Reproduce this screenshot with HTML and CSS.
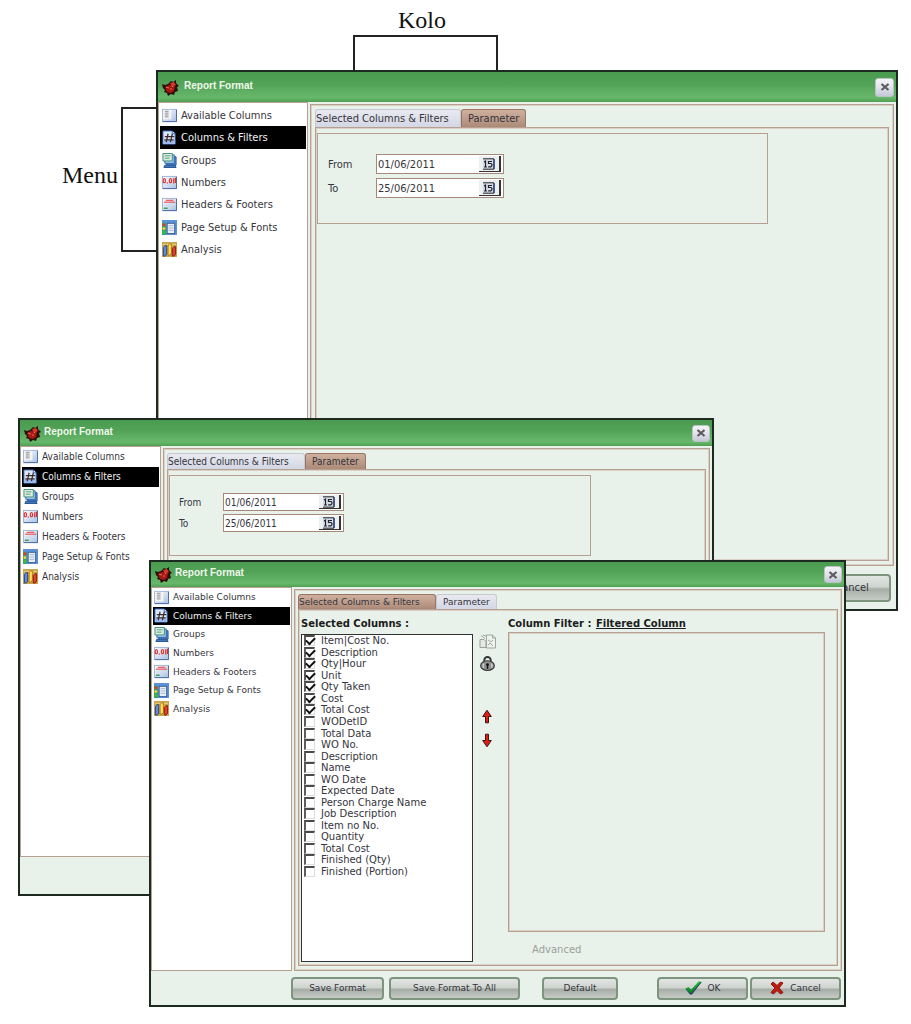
FILE: index.html
```html
<!DOCTYPE html>
<html lang="en">
<head>
    <meta charset="UTF-8">
    <meta name="viewport" content="width=device-width, initial-scale=1.0">
    <title>Report Format</title>
    <link rel="stylesheet" href="styles.css">
</head>
<body>
    <!-- Shared icons -->
    <svg class="sprite" aria-hidden="true">
        <defs>
            <linearGradient id="g-blue" x1="0" y1="0" x2="1" y2="1">
                <stop offset="0" stop-color="#ffffff"/>
                <stop offset="1" stop-color="#a9c0e4"/>
            </linearGradient>
            <linearGradient id="g-check" x1="0" y1="0" x2="0" y2="1">
                <stop offset="0" stop-color="#22d022"/>
                <stop offset="1" stop-color="#0c7a2a"/>
            </linearGradient>
        </defs>
        <symbol id="i-app" viewBox="0 0 17 17">
            <path d="M0 5l3 1 3-1 3-3 2 1 3-2 0 3 3 3-2 1 1 4-3 1-1 3-3-1-3 2-1-3-3-1 1-2-2-2z" fill="#2a0f0a"/>
            <path d="M3 8l4-2 6 1-1 5-3 2-4-1z" fill="#a81812"/>
            <path d="M8 4l4-1 2 3-4 2z" fill="#d8362a"/>
            <path d="M4 8l3 1M8 10l2 0M10 7l1 1" stroke="#f08070" stroke-width="0.800"/>
        </symbol>
        <symbol id="i-available" viewBox="0 0 16 14">
            <rect x="0.500" y="0.500" width="15" height="13" fill="url(#g-blue)" stroke="#9db3d3"/>
            <rect x="1" y="1" width="9" height="10" fill="#f4f4f4"/>
            <path d="M3 2.500h4M3 4.500h4M3 6.500h4M3 8.500h4" stroke="#8a8a8a"/>
            <path d="M1 13.500h14.500V1" fill="none" stroke="#47689c"/>
        </symbol>
        <symbol id="i-columns" viewBox="0 0 16 16">
            <path d="M1 1h10l3 3v11H1z" fill="#dce8fa" stroke="#3a66ba"/>
            <path d="M1 11h13v4H1z" fill="#9bb9ec"/>
            <path d="M11 1v3h3" fill="#fff" stroke="#3a66ba"/>
            <path d="M6.500 4L4.500 13M11 4L9 13M3 7h10M2.500 10.500h10" stroke="#3b2a2a" stroke-width="1.300" fill="none"/>
        </symbol>
        <symbol id="i-groups" viewBox="0 0 16 16">
            <path d="M5 4h10v9H5z" fill="#4f8dd4" stroke="#234f8c"/>
            <path d="M3 2h10v9H3z" fill="#a9cdf2" stroke="#2f66a8"/>
            <path d="M1 0.500h10v8H1z" fill="#d8efdc" stroke="#3c8a78"/>
            <path d="M3 3h6M3 5.500h5" stroke="#5c9b86"/>
            <path d="M3 13h11l1 2.500H2z" fill="#3f78bf" stroke="#234f8c"/>
        </symbol>
        <symbol id="i-numbers" viewBox="0 0 16 14">
            <rect x="0.500" y="0.500" width="15" height="13" fill="url(#g-blue)" stroke="#9db3d3"/>
            <ellipse cx="2.500" cy="5" rx="1.200" ry="2.300" fill="none" stroke="#e0281f" stroke-width="1.200"/>
            <path d="M5 7.500h1.300M12.500 2.500v5.500M14.300 2v5.500" stroke="#e0281f" stroke-width="1.200"/>
            <ellipse cx="9" cy="5" rx="1.200" ry="2.300" fill="none" stroke="#e0281f" stroke-width="1.200"/>
            <path d="M1 13.500h14.500V1" fill="none" stroke="#47689c"/>
        </symbol>
        <symbol id="i-headers" viewBox="0 0 16 14">
            <rect x="0.500" y="0.500" width="15" height="13" fill="url(#g-blue)" stroke="#9db3d3"/>
            <path d="M4 2.500h8M2 4.500h12" stroke="#f03030"/>
            <path d="M2 7.500h12" stroke="#d4dae4"/>
            <path d="M2 11h4" stroke="#2ea043" stroke-width="1.500"/>
            <path d="M1 13.500h14.500V1" fill="none" stroke="#47689c"/>
        </symbol>
        <symbol id="i-page" viewBox="0 0 16 16">
            <rect width="16" height="16" fill="#5b91d8"/>
            <rect y="3" width="4" height="13" fill="#2fa36b"/>
            <circle cx="2" cy="5" r="1.600" fill="#e63a28"/>
            <circle cx="2" cy="9" r="1.600" fill="#f0d020"/>
            <circle cx="2" cy="13" r="1.600" fill="#39c439"/>
            <rect x="5.500" y="3.500" width="8" height="11" fill="#e8eef8" stroke="#3d5f8f"/>
            <path d="M7 6h5M7 8.500h5M7 11h5" stroke="#a3b6d2"/>
        </symbol>
        <symbol id="i-analysis" viewBox="0 0 16 16">
            <rect width="16" height="16" fill="#c9a54c"/>
            <path d="M1 2.500h14M1 5.500h14" stroke="#e9d08a"/>
            <path d="M1.500 6l1.500-2h2v9l-1.500 2h-2z" fill="#5f8ae0" stroke="#26458a"/>
            <path d="M6.500 4L8 2h2v10l-1.500 2h-2z" fill="#ffdf5a" stroke="#b07a10"/>
            <path d="M11 7l1.500-2h2v8L13 15h-2z" fill="#e0402c" stroke="#8a1a12"/>
        </symbol>
        <symbol id="i-close" viewBox="0 0 10 10">
            <path d="M1.500 2l7 6M8.500 2l-7 6" stroke="#5a5a60" stroke-width="2.200"/>
        </symbol>
        <symbol id="i-calendar" viewBox="0 0 12 12">
            <path d="M0 1h11v10H0" fill="#d4dcea"/>
            <path d="M0 0.800h11M0 11.200h11" stroke="#222" stroke-width="1"/>
            <path d="M11 1v10" stroke="#23356e" stroke-width="1.600"/>
            <path d="M1 4l1.500-1v6M1 9h3M9 3.500H5.500V5.500h2.500q1 .5 1 1.600t-1 1.700H5.200" fill="none" stroke="#222" stroke-width="1.200"/>
        </symbol>
        <symbol id="i-copy" viewBox="0 0 17 15">
            <path d="M7.500 1h6l3 3v10h-9z" fill="#eef2ee" stroke="#a0a5a0"/>
            <path d="M13.500 1v3h3" fill="none" stroke="#a0a5a0"/>
            <path d="M1 5.500h4l2 2v6H1z" fill="#e4e9e4" stroke="#9a9f9a"/>
            <path d="M2 1.500l4 3M4 1l3 1M9 6l3 2 2-2M9 11l2-2 3 3" fill="none" stroke="#a0a5a0"/>
        </symbol>
        <symbol id="i-lock" viewBox="0 0 14 14">
            <path d="M4 6V4a3 3 0 0 1 6 0v2" fill="none" stroke="#333" stroke-width="1.800"/>
            <ellipse cx="7" cy="9" rx="6.400" ry="4.500" fill="#8f9290" stroke="#333"/>
            <path d="M3 7v4M11 7v4" stroke="#dfe2df"/>
            <circle cx="7" cy="8" r="1.300" fill="#111"/>
            <path d="M7 8v4" stroke="#111" stroke-width="1.400"/>
        </symbol>
        <symbol id="i-up" viewBox="0 0 10 14">
            <path d="M5 0.700L9.300 7H6.500v6.300h-3V7H0.700z" fill="#dc1e16" stroke="#3c1410"/>
        </symbol>
        <symbol id="i-down" viewBox="0 0 10 14">
            <path d="M5 13.300L9.300 7H6.500V0.700h-3V7H0.700z" fill="#dc1e16" stroke="#3c1410"/>
        </symbol>
        <symbol id="i-ok" viewBox="0 0 17 14">
            <path d="M0.500 8l3.500-1 2 2L14 1h2.800L7 13.500H5z" fill="#27406b"/>
            <path d="M0.500 7.500l3-1.500 2.500 3L13.500 0.500h2.500L6.500 12H5z" fill="url(#g-check)"/>
        </symbol>
        <symbol id="i-cancel" viewBox="0 0 14 14">
            <path d="M1 3l2-2 4 3.500L10.500 1 13 2 9 7l4 4.500L10.500 13 7 9.500 3.500 13 1 11.500 5 7z" fill="#c01c12" stroke="#8d120b"/>
        </symbol>
    </svg>

    <main class="desktop">
        <div class="callout callout-top">
            <span class="callout-label">Kolo</span>
            <span class="bracket bracket-top"></span>
        </div>
        <div class="callout callout-side">
            <span class="callout-label">Menu</span>
            <span class="bracket bracket-side"></span>
        </div>

        <!-- Large window -->
        <section class="window window-large">
            <header class="titlebar">
                <svg class="app-icon"><use href="#i-app"/></svg>
                <h2>Report Format</h2>
                <button class="close" aria-label="Close"><svg><use href="#i-close"/></svg></button>
            </header>
            <div class="body">
                <nav class="menu">
                    <ul>
                        <li><button><svg><use href="#i-available"/></svg>Available Columns</button></li>
                        <li><button class="active"><svg><use href="#i-columns"/></svg>Columns &amp; Filters</button></li>
                        <li><button><svg><use href="#i-groups"/></svg>Groups</button></li>
                        <li><button><svg><use href="#i-numbers"/></svg>Numbers</button></li>
                        <li><button><svg><use href="#i-headers"/></svg>Headers &amp; Footers</button></li>
                        <li><button><svg><use href="#i-page"/></svg>Page Setup &amp; Fonts</button></li>
                        <li><button><svg><use href="#i-analysis"/></svg>Analysis</button></li>
                    </ul>
                </nav>
                <div class="panel">
                    <div class="tabs">
                        <button class="tab tab-wide">Selected Columns &amp; Filters</button>
                        <button class="tab selected">Parameter</button>
                    </div>
                    <div class="page">
                        <form class="params">
                            <label for="from-1">From</label>
                            <div class="date"><input id="from-1" type="text" value="01/06/2011"><button type="button" aria-label="Pick date"><svg><use href="#i-calendar"/></svg></button></div>
                            <label for="to-1">To</label>
                            <div class="date"><input id="to-1" type="text" value="25/06/2011"><button type="button" aria-label="Pick date"><svg><use href="#i-calendar"/></svg></button></div>
                        </form>
                    </div>
                </div>
            </div>
            <footer class="actions">
                <button class="btn btn-end"><svg><use href="#i-cancel"/></svg>Cancel</button>
            </footer>
        </section>

        <!-- Middle window -->
        <section class="window window-medium">
            <header class="titlebar">
                <svg class="app-icon"><use href="#i-app"/></svg>
                <h2>Report Format</h2>
                <button class="close" aria-label="Close"><svg><use href="#i-close"/></svg></button>
            </header>
            <div class="body">
                <nav class="menu">
                    <ul>
                        <li><button><svg><use href="#i-available"/></svg>Available Columns</button></li>
                        <li><button class="active"><svg><use href="#i-columns"/></svg>Columns &amp; Filters</button></li>
                        <li><button><svg><use href="#i-groups"/></svg>Groups</button></li>
                        <li><button><svg><use href="#i-numbers"/></svg>Numbers</button></li>
                        <li><button><svg><use href="#i-headers"/></svg>Headers &amp; Footers</button></li>
                        <li><button><svg><use href="#i-page"/></svg>Page Setup &amp; Fonts</button></li>
                        <li><button><svg><use href="#i-analysis"/></svg>Analysis</button></li>
                    </ul>
                </nav>
                <div class="panel">
                    <div class="tabs">
                        <button class="tab tab-wide">Selected Columns &amp; Filters</button>
                        <button class="tab selected">Parameter</button>
                    </div>
                    <div class="page">
                        <form class="params">
                            <label for="from-2">From</label>
                            <div class="date"><input id="from-2" type="text" value="01/06/2011"><button type="button" aria-label="Pick date"><svg><use href="#i-calendar"/></svg></button></div>
                            <label for="to-2">To</label>
                            <div class="date"><input id="to-2" type="text" value="25/06/2011"><button type="button" aria-label="Pick date"><svg><use href="#i-calendar"/></svg></button></div>
                        </form>
                    </div>
                </div>
            </div>
            <footer class="actions"></footer>
        </section>

        <!-- Front window -->
        <section class="window window-front">
            <header class="titlebar">
                <svg class="app-icon"><use href="#i-app"/></svg>
                <h2>Report Format</h2>
                <button class="close" aria-label="Close"><svg><use href="#i-close"/></svg></button>
            </header>
            <div class="body">
                <nav class="menu">
                    <ul>
                        <li><button><svg><use href="#i-available"/></svg>Available Columns</button></li>
                        <li><button class="active"><svg><use href="#i-columns"/></svg>Columns &amp; Filters</button></li>
                        <li><button><svg><use href="#i-groups"/></svg>Groups</button></li>
                        <li><button><svg><use href="#i-numbers"/></svg>Numbers</button></li>
                        <li><button><svg><use href="#i-headers"/></svg>Headers &amp; Footers</button></li>
                        <li><button><svg><use href="#i-page"/></svg>Page Setup &amp; Fonts</button></li>
                        <li><button><svg><use href="#i-analysis"/></svg>Analysis</button></li>
                    </ul>
                </nav>
                <div class="panel">
                    <div class="tabs">
                        <button class="tab tab-wide selected">Selected Columns &amp; Filters</button>
                        <button class="tab">Parameter</button>
                    </div>
                    <div class="page columns-page">
                        <div class="selected-columns">
                            <h3>Selected Columns :</h3>
                            <div class="checklist">
                                <div class="checklist-items">
                                    <label><input type="checkbox" checked>Item|Cost No.</label>
                                    <label><input type="checkbox" checked>Description</label>
                                    <label><input type="checkbox" checked>Qty|Hour</label>
                                    <label><input type="checkbox" checked>Unit</label>
                                    <label><input type="checkbox" checked>Qty Taken</label>
                                    <label><input type="checkbox" checked>Cost</label>
                                    <label><input type="checkbox" checked>Total Cost</label>
                                    <label><input type="checkbox">WODetID</label>
                                    <label><input type="checkbox">Total Data</label>
                                    <label><input type="checkbox">WO No.</label>
                                    <label><input type="checkbox">Description</label>
                                    <label><input type="checkbox">Name</label>
                                    <label><input type="checkbox">WO Date</label>
                                    <label><input type="checkbox">Expected Date</label>
                                    <label><input type="checkbox">Person Charge Name</label>
                                    <label><input type="checkbox">Job Description</label>
                                    <label><input type="checkbox">Item no No.</label>
                                    <label><input type="checkbox">Quantity</label>
                                    <label><input type="checkbox">Total Cost</label>
                                    <label><input type="checkbox">Finished (Qty)</label>
                                    <label><input type="checkbox">Finished (Portion)</label>
                                </div>
                            </div>
                        </div>
                        <div class="tools">
                            <button aria-label="Copy"><svg class="copy"><use href="#i-copy"/></svg></button>
                            <button aria-label="Lock"><svg class="lock"><use href="#i-lock"/></svg></button>
                            <button class="move-up" aria-label="Move up"><svg class="arrow"><use href="#i-up"/></svg></button>
                            <button aria-label="Move down"><svg class="arrow"><use href="#i-down"/></svg></button>
                        </div>
                        <div class="column-filter">
                            <h3>Column Filter : <a href="#">Filtered Column</a></h3>
                            <div class="filter-box"></div>
                            <button class="advanced" disabled>Advanced</button>
                        </div>
                    </div>
                </div>
            </div>
            <footer class="actions">
                <button class="btn btn-save">Save Format</button>
                <button class="btn btn-save-all">Save Format To All</button>
                <button class="btn btn-default">Default</button>
                <button class="btn btn-end btn-ok"><svg class="ok"><use href="#i-ok"/></svg>OK</button>
                <button class="btn"><svg><use href="#i-cancel"/></svg>Cancel</button>
            </footer>
        </section>
    </main>
</body>
</html>
```

FILE: styles.css
```css
* {
    margin: 0;
    padding: 0;
    box-sizing: border-box;
}

body {
    background: #fff;
    color: #35353d;
}

button,
input {
    font: inherit;
    color: inherit;
    background: none;
    border: 0;
}

svg {
    display: block;
    flex: none;
}

.sprite {
    position: absolute;
    width: 0;
    height: 0;
}

.desktop {
    position: relative;
    min-height: 1024px;
    overflow: hidden;
}

/* Callouts */
.callout {
    position: absolute;
    z-index: 4;
    display: flex;
    font: 24px/28px 'Liberation Serif', serif;
    color: #111;
}

.callout-top {
    left: 353px;
    top: 6px;
    width: 145px;
    flex-direction: column;
    gap: 1px;
}

.callout-top .callout-label {
    padding-left: 45px;
}

.callout-side {
    left: 62px;
    top: 107px;
    gap: 3px;
}

.callout-side .callout-label {
    padding-top: 54px;
}

.bracket {
    border: 2px solid #222;
}

.bracket-top {
    height: 37px;
    border-bottom: 0;
}

.bracket-side {
    width: 36px;
    height: 145px;
    border-right: 0;
}

/* Windows */
.window {
    position: absolute;
    display: flex;
    flex-direction: column;
    background: #e8f2ea;
    border: 2px solid #1c2a1f;
    font-family: 'DejaVu Sans Condensed', 'DejaVu Sans', sans-serif;
    font-stretch: condensed;
    font-size: var(--text);
}

.window-large {
    --text: 11px;
    --bar: 30px;
    --menu-width: 150px;
    --menu-height: 157px;
    --tab: 18px;
    --tab-wide: 146px;
    --footer: 43px;
    left: 156px;
    top: 70px;
    width: 742px;
    height: 541px;
}

.window-medium {
    --text: 10px;
    --bar: 26px;
    --menu-width: 141px;
    --menu-height: 139px;
    --tab: 16px;
    --tab-wide: 138px;
    --footer: 37px;
    left: 18px;
    top: 418px;
    width: 696px;
    height: 478px;
}

.window-front {
    --text: 9px;
    --bar: 25px;
    --menu-width: 141px;
    --menu-height: 130px;
    --tab: 15px;
    --tab-wide: 138px;
    --footer: 34px;
    left: 149px;
    top: 560px;
    width: 697px;
    height: 447px;
    font-family: 'DejaVu Sans', sans-serif;
    font-stretch: normal;
}

.titlebar {
    display: flex;
    align-items: center;
    height: var(--bar);
    padding: 0 2px 0 4px;
    background: linear-gradient(#4a9a50, #52a358 40%, #68b86c 85%, #4f9f54);
}

.app-icon {
    width: 17px;
    height: 17px;
}

.titlebar h2 {
    flex: 1;
    padding: 0 0 4px 3px;
    font: bold 10px 'Liberation Sans', sans-serif;
    color: #eef8ea;
}

.window-large .titlebar h2 {
    padding-left: 5px;
}

.close {
    display: grid;
    place-items: center;
    width: 19px;
    height: 19px;
    background: linear-gradient(#f4f4f8, #e2e3ea 50%, #c3c8d8);
    border: 1px solid #b9c3c0;
    border-radius: 3px;
}

.close svg {
    width: 10px;
    height: 10px;
}

.window-front .close,
.window-medium .close {
    width: 18px;
    height: 17px;
}

.body {
    flex: 1;
    display: flex;
    min-height: 0;
}

/* Left menu */
.menu {
    width: var(--menu-width);
    padding: 0 1px;
    background: #fff;
    border: 1px solid #b5a091;
}

.window-large .menu {
    padding-top: 1px;
}

.menu ul {
    display: flex;
    flex-direction: column;
    height: var(--menu-height);
    list-style: none;
}

.menu li {
    flex: 1;
    display: flex;
}

.menu button {
    flex: 1;
    display: flex;
    align-items: center;
    gap: 4px;
    padding-left: 2px;
    text-align: left;
    white-space: nowrap;
}

.window-medium .menu button,
.window-front .menu button {
    padding-left: 1px;
}

.menu svg {
    width: 15px;
    height: 15px;
}

.menu .active {
    background: #000;
    color: #f2f2f2;
}

/* Tabbed panel */
.panel {
    flex: 1;
    display: flex;
    flex-direction: column;
    min-width: 0;
    margin: 2px 2px 0;
    padding: 3px 4px 4px;
    border: 1px solid #b5a091;
    outline: 1px solid #dccfc4;
    outline-offset: -2px;
}

.window-medium .panel,
.window-front .panel {
    padding: 3px 3px 4px;
}

.tabs {
    display: flex;
    align-items: flex-end;
    height: calc(var(--tab) + 1px);
}

.tab {
    height: var(--tab);
    padding: 0 6px;
    background: linear-gradient(#e9eaf0, #d3d6e4);
    border: 1px solid #c6c8d4;
    border-bottom: 0;
    border-radius: 3px 3px 0 0;
    white-space: nowrap;
}

.tab-wide {
    width: var(--tab-wide);
    padding: 0;
    text-align: left;
}

.tab.selected {
    background: linear-gradient(#cfb09f, #ad8a78);
    border-color: #9a7464;
}

.page {
    flex: 1;
    min-height: 0;
    padding: 5px 1px;
    border: 1px solid #b5a091;
    outline: 1px solid #dccfc4;
    outline-offset: -2px;
}

.params {
    display: grid;
    grid-template-columns: 48px 128px;
    align-content: start;
    align-items: center;
    gap: 4px 0;
    width: 451px;
    height: 91px;
    padding: 20px 10px;
    border: 1px solid #b5a091;
}

.date {
    display: flex;
    height: 20px;
    padding: 1px 2px 1px 1px;
    background: #fff;
    border: 1px solid #a58877;
}

.date input {
    flex: 1;
    min-width: 0;
}

.date button {
    display: grid;
    place-items: center;
    width: 22px;
    background: #eceff0;
    border: solid #333;
    border-width: 0 2px 1px 0;
}

.date svg {
    width: 12px;
    height: 12px;
}

.window-medium .params {
    grid-template-columns: 44px 121px;
    gap: 3px 0;
    width: 422px;
    height: 81px;
    padding: 17px 9px;
}

.window-medium .date {
    height: 18px;
}

/* Column selection page */
.columns-page {
    display: flex;
    padding: 7px 12px 3px 2px;
}

.columns-page h3 {
    height: 17px;
    font-size: 10px;
    line-height: 14px;
    white-space: nowrap;
    color: #1c1c20;
}

.selected-columns {
    display: flex;
    flex-direction: column;
    width: 172px;
}

.checklist {
    flex: 1;
    padding: 0 2px;
    background: #fff;
    border: 1px solid #333;
}

.checklist-items {
    display: flex;
    flex-direction: column;
    height: 242px;
}

.checklist label {
    flex: 1;
    display: flex;
    align-items: center;
    gap: 6px;
    min-height: 0;
    font-size: 10px;
    line-height: 11px;
}

.checklist input {
    appearance: none;
    display: grid;
    place-items: center;
    width: 11px;
    height: 11px;
    background: #fff;
    border: 1px solid #dcdcdc;
    border-top: 2px solid #4a4a4a;
    border-left: 2px solid #5c5c5c;
}

.checklist input:checked::before {
    content: '';
    width: 7px;
    height: 4px;
    border: solid #111;
    border-width: 0 0 2px 2px;
    transform: translateY(-1px) rotate(-45deg);
}

.tools {
    display: flex;
    flex-direction: column;
    align-items: center;
    gap: 7px;
    width: 35px;
    padding: 17px 7px 0 0;
}

.tools .copy {
    width: 17px;
    height: 15px;
}

.tools .lock {
    width: 15px;
    height: 15px;
}

.tools .arrow {
    width: 10px;
    height: 15px;
}

.tools .move-up {
    margin: 31px 0 2px;
}

.column-filter {
    flex: 1;
    display: flex;
    flex-direction: column;
    align-items: flex-start;
}

.column-filter h3 {
    height: 15px;
}

.column-filter a {
    padding-left: 1px;
    color: inherit;
}

.filter-box {
    flex: 1;
    align-self: stretch;
    border: 1px solid #b5a091;
    outline: 1px solid #dccfc4;
    outline-offset: -2px;
}

.advanced {
    margin: 11px 0 5px 24px;
    font-size: 10px;
    line-height: 14px;
    color: #9a9f9c;
}

/* Buttons under the panel */
.actions {
    display: flex;
    align-items: center;
    gap: 5px;
    height: var(--footer);
    padding: 0 3px 0 140px;
}

.btn {
    display: flex;
    align-items: center;
    justify-content: center;
    gap: 6px;
    width: 91px;
    height: 23px;
    background: linear-gradient(#e2e5e2, #d0d4d0 45%, #a7ada7 55%, #c6cbc6);
    border: 2px solid #7d957f;
    border-radius: 4px;
    white-space: nowrap;
}

.btn svg {
    width: 14px;
    height: 14px;
}

.btn .ok {
    width: 17px;
}

.btn-save {
    width: 93px;
}

.btn-save-all {
    width: 131px;
}

.btn-default {
    width: 76px;
    margin-left: 17px;
}

.btn-end {
    margin-left: auto;
}

.window-large .btn {
    width: 98px;
    height: 28px;
}

.window-large .actions {
    padding-right: 5px;
}

.window-front .btn-ok {
    margin-right: -3px;
}
```
